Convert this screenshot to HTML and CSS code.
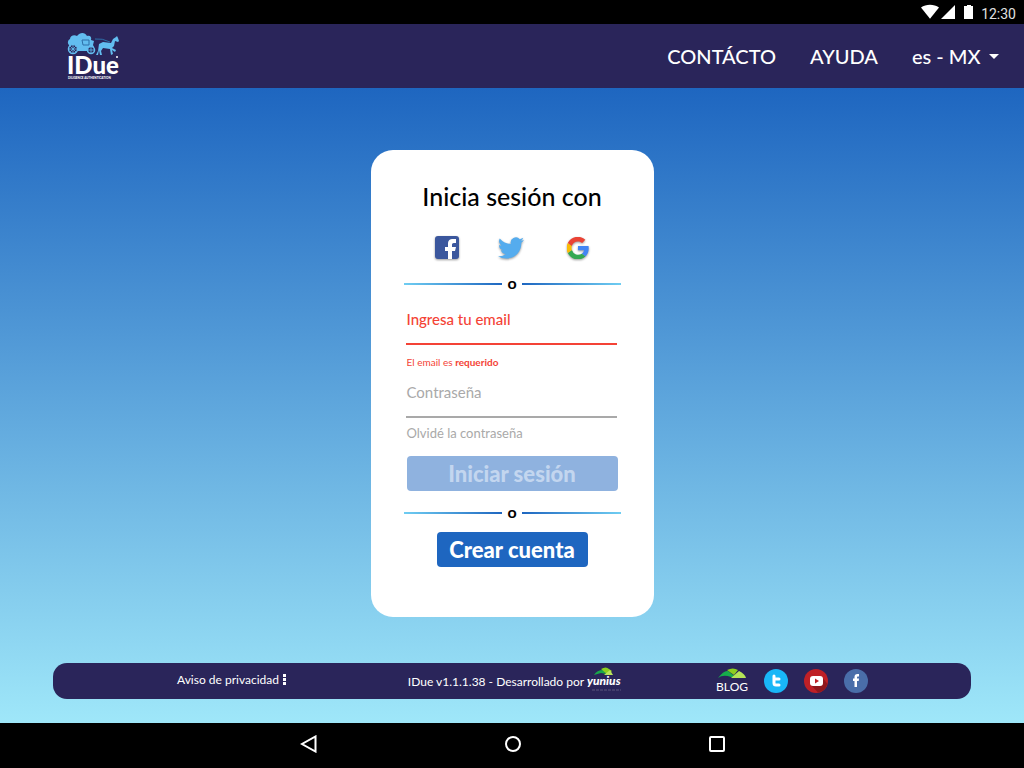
FILE: index.html
```html
<!DOCTYPE html>
<html lang="es-MX">
<head>
<meta charset="utf-8">
<meta name="viewport" content="width=device-width, initial-scale=1">
<title>IDue</title>
<link rel="stylesheet" href="styles.css">
</head>
<body>
<div class="status-bar">
  <svg class="status-icons" width="54" height="16" viewBox="0 0 54 16" fill="#fff" aria-hidden="true">
    <path d="M0 3.500C5-.1 13-.1 18 3.500L9 14.800Z"/>
    <path d="M34 1v14H20Z"/>
    <path d="M43 2h3V1h4v1h2v13h-9Z"/>
  </svg>
  <time class="clock">12:30</time>
</div>

<header class="header">
  <a class="logo" href="#" aria-label="IDue">
    <svg width="56" height="48" viewBox="0 0 56 48" aria-hidden="true">
      <g fill="#62bdf0">
        <path d="M2 13c-2-2-1-5 1-6 0-3 4-5 7-3 3-4 8-4 10 0 3-1 5 1 4 4l3 1-1 4 1 2-3 4H10l-2-3H3Z"/>
        <path d="M31 19l1-7 4-2 8 1 2-4 3-2 1-1 1 2 1 3-1 1-3-1-1 5-2 2 4 2-1 2-3-2 1 4-2 1-1-6-7-1-2 3 1 4h-2l-1-5-1 5h-2Z"/>
      </g>
      <g fill="#2a255a" stroke="#62bdf0" stroke-width="1.500">
        <circle cx="6" cy="17" r="4.500"/><circle cx="24" cy="18" r="3.500"/>
        <path d="M2 17h8M6 13v8M3 14l6 6M9 14l-6 6M21 18h6M24 15v6" fill="none" stroke-width=".8"/>
      </g>
      <path d="M15 8h7v5h-6ZM28 7q7-1 15 3" fill="none" stroke="#2d6fa8"/>
      <text class="logo-name" x="0" y="42">IDue</text>
      <text class="logo-tagline" x="1" y="47">DILIGENCE AUTHENTICATION</text>
      <circle cx="50" cy="25" r="1" fill="#fff"/>
    </svg>
  </a>
  <nav class="menu">
    <a href="#">CONTÁCTO</a>
    <a href="#">AYUDA</a>
    <span class="language">
      <select aria-label="Idioma"><option>es - MX</option></select>
      <svg width="10" height="5" viewBox="0 0 10 5" aria-hidden="true"><path d="M0 0h10L5 5Z" fill="#fff"/></svg>
    </span>
  </nav>
</header>

<div class="page">
  <main class="content">
    <form class="card">
      <h1>Inicia sesión con</h1>
      <div class="social">
        <button type="button" aria-label="Facebook">
          <svg width="26" height="26" viewBox="0 0 26 26"><rect x="1" y="1" width="24" height="23" rx="3" fill="#3b579d"/><path d="M14 24v-8h-3v-4h3v-3c0-4 2-5 5-5h3v4h-2c-2 0-2 1-2 2v2h4l-1 4h-3v8Z" fill="#fff"/></svg>
        </button>
        <button class="social-twitter" type="button" aria-label="Twitter">
          <svg width="26" height="26" viewBox="0 0 24 24"><path fill="#55acee" d="M23.950 4.570a10 10 0 0 1-2.820.77 4.960 4.960 0 0 0 2.160-2.720 9.900 9.900 0 0 1-3.120 1.190 4.920 4.920 0 0 0-8.380 4.480A13.930 13.930 0 0 1 1.640 3.160a4.920 4.920 0 0 0 1.520 6.570 4.900 4.900 0 0 1-2.230-.61v.06a4.920 4.920 0 0 0 3.950 4.830 4.900 4.900 0 0 1-2.220.08 4.930 4.930 0 0 0 4.600 3.420A9.870 9.870 0 0 1 0 19.540a13.940 13.940 0 0 0 7.550 2.210c9.050 0 14-7.500 14-13.980l-.01-.64a10 10 0 0 0 2.410-2.560Z"/></svg>
        </button>
        <button type="button" aria-label="Google">
          <svg width="22" height="22" viewBox="0 0 24 24"><path fill="#4285f4" d="M12 9.800v4.700h6.600a5.600 5.600 0 0 1-2.400 3.700l3.900 3c2.300-2.100 3.600-5.200 3.600-8.900q0-1.300-.2-2.500Z"/><path fill="#34a853" d="M.9 17.400A12 12 0 0 0 20.100 21.200l-3.900-3a7.200 7.200 0 0 1-10.900-3.900Z"/><path fill="#fbbc05" d="M.9 6.600a12 12 0 0 0 0 10.800l4.400-3.100a7 7 0 0 1 0-4.600Z"/><path fill="#ea4335" d="M12 4.800c1.800 0 3.300.6 4.600 1.800L20 3.100A12 12 0 0 0 .9 6.600l4.400 3.100A7.100 7.100 0 0 1 12 4.800Z"/></svg>
        </button>
      </div>
      <div class="divider"><span>o</span></div>
      <div class="field field-error">
        <label for="email">Ingresa tu email</label>
        <input id="email" type="email" aria-describedby="email-error" aria-invalid="true">
      </div>
      <p class="error" id="email-error">El email es <strong>requerido</strong></p>
      <div class="field">
        <label for="password">Contraseña</label>
        <input id="password" type="password">
      </div>
      <a class="forgot" href="#">Olvidé la contraseña</a>
      <button class="button button-submit" type="submit" disabled>Iniciar sesión</button>
      <div class="divider"><span>o</span></div>
      <button class="button button-create" type="button">Crear cuenta</button>
    </form>
  </main>

  <footer class="footer">
    <a class="privacy" href="#">Aviso de privacidad
      <svg width="3" height="11" viewBox="0 0 3 11" fill="#fff" aria-hidden="true"><path d="M0 0h3v3H0zM0 4h3v3H0zM0 8h3v3H0z"/></svg>
    </a>
    <p class="version">IDue v1.1.1.38 - Desarrollado por
      <a href="#" aria-label="yunius">
        <svg width="38" height="28" viewBox="0 0 38 28" aria-hidden="true">
          <path d="M8 8q3-5 9-5l4 4-6-1Z" fill="#19a84a"/><path d="M15 2q5-3 8 0l3 2-4 4Z" fill="#8ccf20"/><path d="M18 8l6-5 3 5Z" fill="#b9e45a"/>
          <text class="yunius" x="1" y="18">yunius</text>
          <path d="M6 23h29" stroke="#5b567f" stroke-dasharray="3 1"/>
        </svg>
      </a>
    </p>
    <div class="links">
      <a class="blog" href="#">
        <svg width="30" height="12" viewBox="0 0 30 12" aria-hidden="true"><path d="M1 10Q7 2 11 3l9 7-6-1Q6 6 1 10Z" fill="#16ad4b"/><path d="M10 2q6-3 11 0l-4 5Z" fill="#8ccf20"/><path d="M14 10l8-7q6 3 7 7Z" fill="#b5e557"/></svg>
        BLOG
      </a>
      <a href="#" aria-label="Twitter"><svg width="24" height="24" viewBox="0 0 24 24"><circle cx="12" cy="12" r="12" fill="#19b7f7"/><path d="M10 7v7q0 2 2 2h3M10 10h5" fill="none" stroke="#fff" stroke-width="3" stroke-linecap="round"/></svg></a>
      <a href="#" aria-label="YouTube"><svg width="24" height="24" viewBox="0 0 24 24"><circle cx="12" cy="12" r="12" fill="#bf2026"/><path d="M18 8l5.500 7A12 12 0 0 1 14 23.500L7 16Z" fill="#8f181d"/><rect x="6" y="7" width="13" height="10" rx="3" fill="#fff"/><path d="M11 9.500v5l4-2.500Z" fill="#bf2026"/></svg></a>
      <a href="#" aria-label="Facebook"><svg width="24" height="24" viewBox="0 0 24 24"><circle cx="12" cy="12" r="12" fill="#4a6ea9"/><path d="M10.500 18v-6H9V9.500h1.500V8c0-2 1-3 3-3H15v2.500h-1c-1 0-1 .5-1 2h2l-.3 2.500H13v6Z" fill="#fff"/></svg></a>
    </div>
  </footer>
</div>

<nav class="system-bar">
  <button type="button" aria-label="Atrás"><svg width="18" height="18" viewBox="0 0 18 18"><path d="M15.500 1.500v15L2 9Z"/></svg></button>
  <button type="button" aria-label="Inicio"><svg width="18" height="18" viewBox="0 0 18 18"><circle cx="9" cy="9" r="7"/></svg></button>
  <button type="button" aria-label="Recientes"><svg width="18" height="18" viewBox="0 0 18 18"><rect x="2" y="2" width="14" height="14" rx="1"/></svg></button>
</nav>
</body>
</html>
```

FILE: styles.css
```css
* { box-sizing: border-box; }

body {
  margin: 0;
  min-height: 100vh;
  display: flex;
  flex-direction: column;
  font-family: Lato, sans-serif;
  font-size: 15px;
  color: #000;
}

a { color: inherit; text-decoration: none; }
svg { display: block; }
button { border: 0; padding: 0; background: none; font: inherit; color: inherit; cursor: pointer; }

.status-bar {
  height: 24px;
  padding: 0 8px;
  display: flex;
  justify-content: flex-end;
  align-items: center;
  gap: 6px;
  background: #000;
  color: #e0e0e0;
}
.clock { font: 14px/24px Roboto, sans-serif; padding-top: 3px; }

.header {
  height: 64px;
  padding: 0 25px 0 67px;
  display: flex;
  align-items: center;
  justify-content: space-between;
  background: #2a255a;
  color: #fff;
}
.logo-name { font: 900 24px Lato, sans-serif; fill: #fff; }
.logo-tagline { font: 900 3px Lato, sans-serif; fill: #fff; }
.menu { display: flex; align-items: center; gap: 34px; font-size: 20px; font-weight: 500; }
.language { display: flex; align-items: center; gap: 8px; }
.language select {
  appearance: none;
  border: 0;
  padding: 0;
  background: none;
  color: inherit;
  font: inherit;
}

.page {
  flex: 1;
  display: flex;
  flex-direction: column;
  padding-bottom: 24px;
  background: linear-gradient(#1e66c0, #9fe7f9);
}
.content { flex: 1; display: flex; justify-content: center; align-items: center; padding: 32px 16px 16px; }

.card {
  width: 283px;
  padding: 30px 33px 50px;
  display: flex;
  flex-direction: column;
  border-radius: 22px;
  background: #fff;
}
.card h1 { margin: 0; font-size: 25px; line-height: 32px; font-weight: 500; text-align: center; }

.social {
  display: flex;
  align-items: center;
  justify-content: space-between;
  margin: 22px 32px 0 30px;
  height: 28px;
}
.social-twitter { margin-right: 5px; }
.social svg { filter: drop-shadow(0 1px 1px rgba(0, 0, 0, .4)); }

.divider {
  display: flex;
  align-items: center;
  gap: 5px;
  height: 20px;
  margin-top: 12px;
  font-size: 16px;
  line-height: 16px;
  font-weight: 700;
}
.divider span { padding-bottom: 2px; }
.divider::before, .divider::after { content: ""; flex: 1; height: 2px; }
.divider::before { background: linear-gradient(90deg, #6fcdf2, #1e66c0); }
.divider::after { background: linear-gradient(90deg, #1e66c0, #6fcdf2); }

.field { display: grid; margin: 0 4px 0 2px; color: #a9a9a9; }
.field label, .field input { grid-area: 1 / 1; }
.field label { padding: 4px 1px; line-height: 20px; pointer-events: none; }
.field input {
  width: 100%;
  height: 40px;
  padding: 0 0 12px;
  border: 0;
  border-bottom: 2px solid #a9a9a9;
  background: none;
  font: inherit;
  outline: 0;
}
.field-error { margin-top: 11px; color: #f44336; font-weight: 500; }
.field-error input { border-color: #f44336; }
.error { margin: 9px 3px 8px; font-size: 10px; line-height: 16px; color: #f44336; }
.forgot { align-self: flex-start; margin: 7px 3px 0; font-size: 13px; line-height: 16px; color: #a9a9a9; }

.button {
  height: 35px;
  border-radius: 4px;
  background: #1e66c0;
  color: #fff;
  font-size: 22px;
  font-weight: 900;
}
.button-submit { margin: 15px 3px 0; background: #8fb2df; color: #c3d6ef; cursor: default; }
.button-create { align-self: center; min-width: 151px; margin-top: 9px; }

.footer {
  min-height: 36px;
  margin: 0 53px;
  padding: 0 103px 0 124px;
  display: flex;
  align-items: center;
  border-radius: 14px;
  background: #2a255a;
  color: #fff;
  font-size: 12px;
}
.privacy { flex: 1; display: flex; align-items: center; gap: 4px; padding-bottom: 3px; }
.version { display: flex; align-items: center; gap: 2px; margin: 0 92px 0 0; }
.yunius { font: italic 900 12px Lato, sans-serif; fill: #fff; }
.links { display: flex; align-items: center; gap: 16px; }
.blog { display: flex; flex-direction: column; align-items: center; font-size: 12px; line-height: 14px; }

.system-bar {
  height: 45px;
  padding: 0 0 3px 2px;
  display: flex;
  justify-content: center;
  align-items: center;
  gap: 186px;
  background: #000;
}
.system-bar svg { fill: none; stroke: #fff; stroke-width: 2; }
```
